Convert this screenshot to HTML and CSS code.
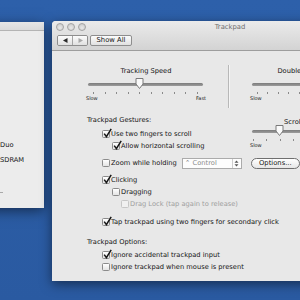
FILE: index.html
```html
<!DOCTYPE html>
<html lang="en">
<head>
    <meta charset="UTF-8">
    <meta name="viewport" content="width=device-width, initial-scale=1.0">
    <title>Trackpad</title>
    <link rel="stylesheet" href="styles.css">
</head>
<body>
    <main class="desktop">
        <!--뒤쪽 창-->
        <div class="window backWindow">
            <div class="backToolbar"></div>
            <div class="backBody">
                <p class="backLine">Duo</p>
                <p class="backLine second">SDRAM</p>
                <span class="backDash"></span>
            </div>
        </div>

        <!--Trackpad 창-->
        <div class="window prefWindow">
            <div class="chrome">
                <header class="titleBar">
                    <div class="lights"><span></span><span></span><span></span></div>
                    <p class="title">Trackpad</p>
                    <div></div>
                </header>
                <div class="toolBar">
                    <div class="navBtns">
                        <button class="navBtn"><svg width="5" height="5" viewBox="0 0 5 5"><polygon points="0,2.5 4.5,0 4.5,5" fill="#2a2a2a"/></svg></button>
                        <button class="navBtn"><svg width="5" height="5" viewBox="0 0 5 5"><polygon points="5,2.5 0.5,0 0.5,5" fill="#a8a8a8"/></svg></button>
                    </div>
                    <button class="showAll">Show All</button>
                </div>
            </div>

            <section class="pane">
                <div class="speeds">
                    <div class="speed">
                        <p class="speedLabel">Tracking Speed</p>
                        <div class="slider">
                            <div class="track"></div>
                            <svg class="thumb" style="left: 48.5px" width="9" height="11" viewBox="0 0 9 11"><path d="M1 0.5 H8 V6 L4.5 10.5 L1 6 Z" fill="#fafafa" stroke="#7a7a7a"/></svg>
                        </div>
                        <div class="ticks"><i></i><i></i><i></i><i></i><i></i><i></i><i></i><i></i><i></i><i></i></div>
                        <div class="ends"><span>Slow</span><span>Fast</span></div>
                    </div>
                    <div class="divider"></div>
                    <div class="speed">
                        <p class="speedLabel">Double-Click Speed</p>
                        <div class="slider">
                            <div class="track"></div>
                            <svg class="thumb" style="left: 80px" width="9" height="11" viewBox="0 0 9 11"><path d="M1 0.5 H8 V6 L4.5 10.5 L1 6 Z" fill="#fafafa" stroke="#7a7a7a"/></svg>
                        </div>
                        <div class="ticks"><i></i><i></i><i></i><i></i><i></i><i></i><i></i><i></i><i></i><i></i><i></i></div>
                        <div class="ends"><span>Slow</span><span>Fast</span></div>
                    </div>
                </div>

                <div class="gestures">
                    <div class="gestTop">
                        <div class="gestLeft">
                            <p class="heading">Trackpad Gestures:</p>
                            <label class="check lv1 topRow"><span class="box on"></span>Use two fingers to scroll</label>
                            <label class="check lv2"><span class="box on"></span>Allow horizontal scrolling</label>
                        </div>
                        <div class="scrollCol">
                            <p class="speedLabel small">Scrolling Speed</p>
                            <div class="slider">
                                <div class="track"></div>
                                <svg class="thumb" style="left: 24.5px" width="9" height="11" viewBox="0 0 9 11"><path d="M1 0.5 H8 V6 L4.5 10.5 L1 6 Z" fill="#fafafa" stroke="#7a7a7a"/></svg>
                            </div>
                            <div class="ticks scrollTicks"><i></i><i></i><i></i><i></i><i></i><i></i><i></i><i></i><i></i></div>
                            <div class="ends"><span>Slow</span><span>Fast</span></div>
                        </div>
                    </div>

                    <div class="check lv1 zoomRow">
                        <span class="box"></span>Zoom while holding
                        <div class="popup">
                            <span class="popupText">⌃ Control</span>
                            <span class="popupArrow"><svg width="5" height="7" viewBox="0 0 5 7"><polygon points="2.5,0.5 4.5,2.8 0.5,2.8" fill="#555"/><polygon points="2.5,6.5 4.5,4.2 0.5,4.2" fill="#555"/></svg></span>
                        </div>
                        <button class="optionsBtn">Options...</button>
                    </div>

                    <label class="check lv1 gap5"><span class="box on"></span>Clicking</label>
                    <label class="check lv2"><span class="box"></span>Dragging</label>
                    <label class="check lv3 off"><span class="box"></span>Drag Lock (tap again to release)</label>
                    <label class="check lv1 gap6"><span class="box on"></span>Tap trackpad using two fingers for secondary click</label>

                    <p class="heading optHeading">Trackpad Options:</p>
                    <label class="check lv1 gap1"><span class="box on"></span>Ignore accidental trackpad input</label>
                    <label class="check lv1"><span class="box"></span>Ignore trackpad when mouse is present</label>
                </div>
            </section>
        </div>
    </main>
</body>
</html>
```

FILE: styles.css
```css
*{
    margin: 0; padding: 0;
    box-sizing: border-box;
}
body{
    font-family: "DejaVu Sans", sans-serif;
    font-size: 6.7px;
    color: #151515;
    background-color: #2c5ea6;
}
button{
    font-family: inherit;
    color: #151515;
}
.desktop{
    width: 300px;
    height: 300px;
    position: relative;
    overflow: hidden;
    background: linear-gradient(#2d60aa, #2a5aa1);
}
.window{
    position: absolute;
    box-shadow: 0 3px 12px rgba(0, 0, 0, 0.5);
}

/* 뒤쪽 창 */
.backWindow{
    left: -60px;
    top: 22px;
    width: 104px;
    height: 186px;
    background-color: #ececec;
}
.backToolbar{
    height: 9px;
    background: linear-gradient(#e6e6e6, #dadada);
    border-bottom: 1px solid #b4b4b4;
}
.backBody{
    padding-left: 60px;
    padding-top: 109px;
}
.backLine{
    line-height: 10px;
}
.backLine.second{
    margin-top: 5px;
}
.backDash{
    display: block;
    width: 3px;
    height: 1px;
    margin-top: 27px;
    background-color: #a9a9a9;
}

/* Trackpad 창 */
.prefWindow{
    left: 52px;
    top: 21px;
    width: 356px;
    height: 260px;
    border-radius: 4px 4px 0 0;
    background-color: #e8e8e8;
    overflow: hidden;
}
.chrome{
    height: 30px;
    background: linear-gradient(#ebebeb, #d3d3d3);
    border-bottom: 1px solid #9d9d9d;
}
.titleBar{
    height: 12px;
    display: grid;
    grid-template-columns: 1fr auto 1fr;
    align-items: center;
}
.lights{
    display: flex;
    gap: 3px;
    padding-left: 4px;
}
.lights span{
    width: 8px;
    height: 8px;
    border-radius: 50%;
    border: 1px solid #a3a3a3;
    background: radial-gradient(circle at 50% 65%, #e9e9e9, #c6c6c6);
}
.title{
    color: #6e6e6e;
    font-size: 6.8px;
}
.toolBar{
    height: 17px;
    display: flex;
    align-items: flex-start;
    gap: 2px;
    padding: 2px 0 0 5px;
}
.navBtns{
    display: flex;
    width: 31px;
    height: 11px;
    border: 1px solid #8e8e8e;
    border-radius: 2px;
    overflow: hidden;
}
.navBtn{
    flex: 1;
    border: 0;
    display: flex;
    align-items: center;
    justify-content: center;
    background: linear-gradient(#fcfcfc, #e0e0e0);
}
.navBtn + .navBtn{
    border-left: 1px solid #a5a5a5;
}
.showAll{
    width: 42px;
    height: 11px;
    border: 1px solid #8e8e8e;
    border-radius: 2px;
    font-size: 6.8px;
    line-height: 9px;
    background: linear-gradient(#fcfcfc, #e0e0e0);
}

.pane{
    padding: 14px 0 0 34px;
}
.speeds{
    display: flex;
}
.speed{
    width: 120px;
    padding-top: 1px;
}
.speedLabel{
    line-height: 10px;
    text-align: center;
}
.speedLabel.small{
    line-height: 8px;
}
.slider{
    position: relative;
    height: 12px;
    margin-top: 2px;
    padding-top: 5px;
}
.scrollCol .slider{
    margin-top: -1px;
}
.track{
    height: 3px;
    margin: 0 3px 0 2px;
    border-radius: 2px;
    background: linear-gradient(#7b7b7b, #9c9c9c);
}
.thumb{
    position: absolute;
    top: 0;
}
.ticks{
    height: 5px;
    display: flex;
    justify-content: space-between;
    padding: 2px 8px 0 7px;
}
.ticks i{
    width: 1px;
    height: 2px;
    background-color: #8a8a8a;
}
.scrollTicks{
    padding: 2px 10px 0 3px;
}
.ends{
    display: flex;
    justify-content: space-between;
    font-size: 5px;
    line-height: 6px;
}
.divider{
    width: 1px;
    height: 43px;
    margin: 0 21px 0 22px;
    background-color: #b8b8b8;
    box-shadow: 1px 0 0 #f5f5f5;
}

.gestures{
    margin: 6px 0 0 1px;
}
.gestTop{
    display: flex;
}
.gestLeft{
    width: 163px;
}
.scrollCol{
    width: 120px;
    padding-top: 4px;
}
.heading{
    line-height: 12px;
}
.check{
    display: flex;
    align-items: center;
    height: 12px;
    white-space: nowrap;
}
.lv1{
    padding-left: 15px;
}
.lv2{
    padding-left: 25px;
}
.lv3{
    padding-left: 34px;
}
.topRow{
    margin-top: 2px;
}
.box{
    position: relative;
    width: 8px;
    height: 8px;
    margin-right: 1px;
    border: 1px solid #8b8b8b;
    border-radius: 1.5px;
    background: linear-gradient(#ffffff, #e4e4e4);
    flex-shrink: 0;
}
.box.on::after{
    content: "";
    position: absolute;
    left: 0;
    top: -3px;
    width: 9px;
    height: 10px;
    background: url("data:image/svg+xml,%3Csvg xmlns='http://www.w3.org/2000/svg' viewBox='0 0 9 10'%3E%3Cpath d='M1.2 5.6 L3.4 8.6 L8.2 0.8' fill='none' stroke='%23161616' stroke-width='1.5'/%3E%3C/svg%3E") no-repeat;
}
.check.off{
    color: #9e9e9e;
}
.check.off .box{
    border-color: #c6c6c6;
    background: #f0f0f0;
}
.zoomRow{
    margin-top: 5px;
}
.popup{
    display: flex;
    width: 60px;
    height: 11px;
    margin-left: 5px;
    border: 1px solid #ababab;
    background-color: #fdfdfd;
    color: #8a8a8a;
}
.popupText{
    flex: 1;
    padding-left: 2px;
    line-height: 9px;
}
.popupArrow{
    width: 9px;
    display: flex;
    align-items: center;
    justify-content: center;
    border-left: 1px solid #cfcfcf;
}
.optionsBtn{
    width: 49px;
    height: 11px;
    margin-left: 9px;
    border: 1px solid #6f6f6f;
    border-radius: 6px;
    font-size: 6.8px;
    line-height: 9px;
    background: linear-gradient(#ffffff, #e6e6e6);
}
.gap5{
    margin-top: 5px;
}
.gap6{
    margin-top: 6px;
}
.gap1{
    margin-top: 1px;
}
.optHeading{
    margin-top: 8px;
}
```
